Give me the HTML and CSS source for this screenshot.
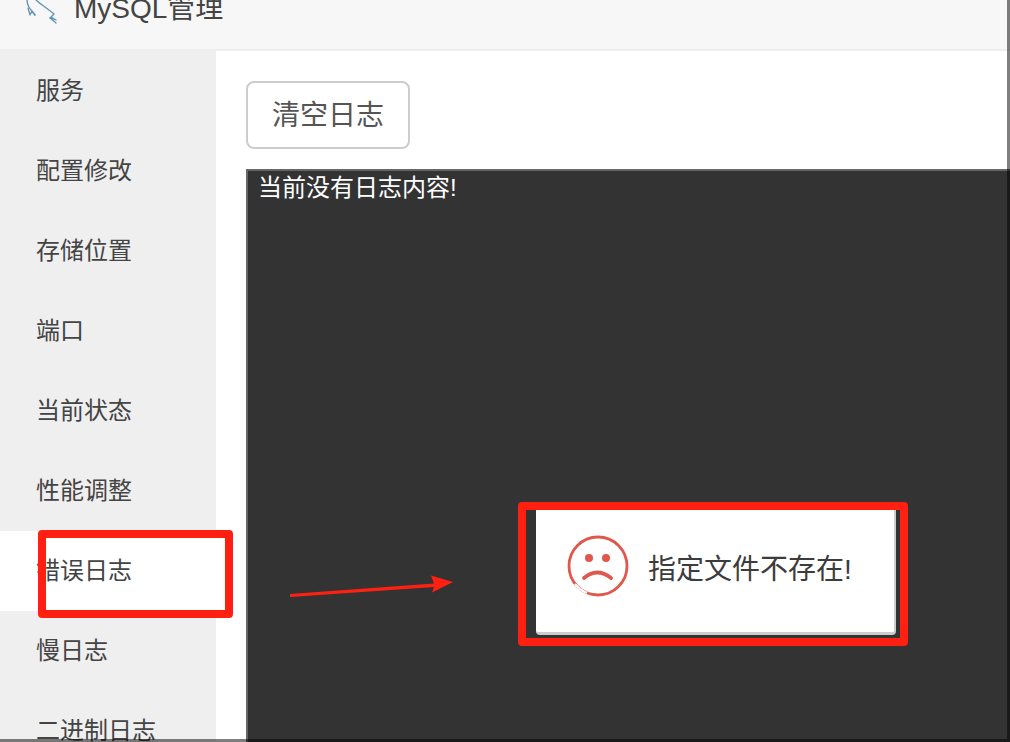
FILE: index.html
```html
<!DOCTYPE html>
<html lang="zh-CN">
<head>
<meta charset="utf-8">
<title>MySQL管理</title>
<link rel="stylesheet" href="styles.css">
</head>
<body>
<div class="page">
  <header class="header">
    <svg class="logo" width="36" height="26" viewBox="0 0 36 26" fill="none" stroke="#5f93b5" stroke-width="1.3" stroke-linecap="round" stroke-linejoin="round">
      <path d="M1 0C1 5 3 8 9 15"/>
      <path d="M2 8L4 15L6 11L9 15"/>
      <path d="M10 0C14 4 20 7 28 14L24 18L30 20L25 17"/>
      <path d="M24 18L30 23"/>
    </svg>
    <span class="title">MySQL管理</span>
  </header>
  <div class="body-row">
    <nav class="sidebar">
      <a class="nav-item">服务</a>
      <a class="nav-item">配置修改</a>
      <a class="nav-item">存储位置</a>
      <a class="nav-item">端口</a>
      <a class="nav-item">当前状态</a>
      <a class="nav-item">性能调整</a>
      <a class="nav-item active">错误日志</a>
      <a class="nav-item">慢日志</a>
      <a class="nav-item">二进制日志</a>
    </nav>
    <main class="main">
      <button class="btn">清空日志</button>
      <div class="log">当前没有日志内容!</div>
    </main>
  </div>

  <div class="toast">
    <svg class="sad" width="64" height="64" viewBox="0 0 64 64" fill="none" stroke="#e2574c">
      <circle cx="32" cy="32" r="29" stroke-width="2.8"/>
      <path d="M9 50A29 29 0 0 0 21 59" stroke="#fff" stroke-width="2.2"/>
      <circle cx="23" cy="24" r="4" fill="#e2574c" stroke="none"/>
      <circle cx="40" cy="24" r="4" fill="#e2574c" stroke="none"/>
      <path d="M18 44Q31 33 45 44" stroke-width="3.8" stroke-linecap="round"/>
    </svg>
    <span class="toast-text">指定文件不存在!</span>
  </div>

  <div class="mark mark-nav"></div>
  <div class="mark mark-toast"></div>
  <svg class="arrow" width="170" height="24" viewBox="0 0 170 24">
    <path d="M0 20L144 9.5L141 1.5L163 8L142 18.5L144 13L0.5 23L0 23Z" fill="#ff2012"/>
  </svg>
  <div class="edge edge-right"></div>
  <div class="edge edge-bottom"></div>
</div>
</body>
</html>
```

FILE: styles.css
```css
* {
  box-sizing: border-box;
}

html,
body {
  margin: 0;
  padding: 0;
}

body {
  font-family: "Liberation Sans", "Noto Sans CJK SC", sans-serif;
  color: #444;
}

.page {
  position: relative;
  width: 1010px;
  height: 742px;
  overflow: hidden;
  background: #fff;
  display: flex;
  flex-direction: column;
}

.header {
  flex: none;
  height: 51px;
  background: #f7f7f7;
  border-bottom: 2px solid #eeeeee;
  display: flex;
  align-items: flex-start;
  padding-left: 26px;
  gap: 12px;
  overflow: hidden;
}

.logo {
  flex: none;
}

.title {
  font-size: 28px;
  line-height: 36px;
  margin-top: -9px;
  color: #444;
}

.body-row {
  flex: 1;
  min-height: 0;
  display: flex;
}

.sidebar {
  flex: none;
  width: 216px;
  background: #efefef;
  display: flex;
  flex-direction: column;
}

.nav-item {
  flex: none;
  height: 80px;
  line-height: 80px;
  padding-left: 36px;
  font-size: 24px;
  color: #444;
}

.nav-item.active {
  background: #fff;
}

.main {
  flex: 1;
  min-width: 0;
  padding: 30px 0 0 30px;
  display: flex;
  flex-direction: column;
  align-items: flex-start;
  gap: 20px;
}

.btn {
  flex: none;
  width: 164px;
  height: 68px;
  background: #fff;
  border: 2px solid #cccccc;
  border-radius: 8px;
  font: inherit;
  font-size: 28px;
  color: #555;
  padding: 0 0 4px;
}

.log {
  flex: none;
  width: 780px;
  height: 600px;
  background: #333;
  border: 2px solid #666;
  color: #fff;
  font-size: 24px;
  line-height: 34px;
  padding-left: 10px;
}

.toast {
  position: absolute;
  left: 536px;
  top: 505px;
  width: 360px;
  height: 130px;
  background: #fff;
  border-radius: 4px;
  border-bottom: 3px solid #ccc;
  border-right: 2px solid #ccc;
  display: flex;
  align-items: center;
  padding: 0 0 6px 30px;
  gap: 18px;
}

.sad {
  flex: none;
}

.toast-text {
  font-size: 28px;
  color: #3c3c3c;
  white-space: nowrap;
  margin-top: 2px;
}

.mark {
  position: absolute;
  border: 8px solid #ff2012;
  border-radius: 4px;
}

.mark-nav {
  left: 38px;
  top: 530px;
  width: 195px;
  height: 88px;
}

.mark-toast {
  left: 518px;
  top: 502px;
  width: 390px;
  height: 144px;
}

.arrow {
  position: absolute;
  left: 290px;
  top: 574px;
}

.edge {
  position: absolute;
  background: rgba(0, 0, 0, 0.5);
}

.edge-right {
  top: 0;
  right: 0;
  width: 3px;
  height: 742px;
}

.edge-bottom {
  left: 0;
  bottom: 0;
  width: 1007px;
  height: 3px;
}
```
